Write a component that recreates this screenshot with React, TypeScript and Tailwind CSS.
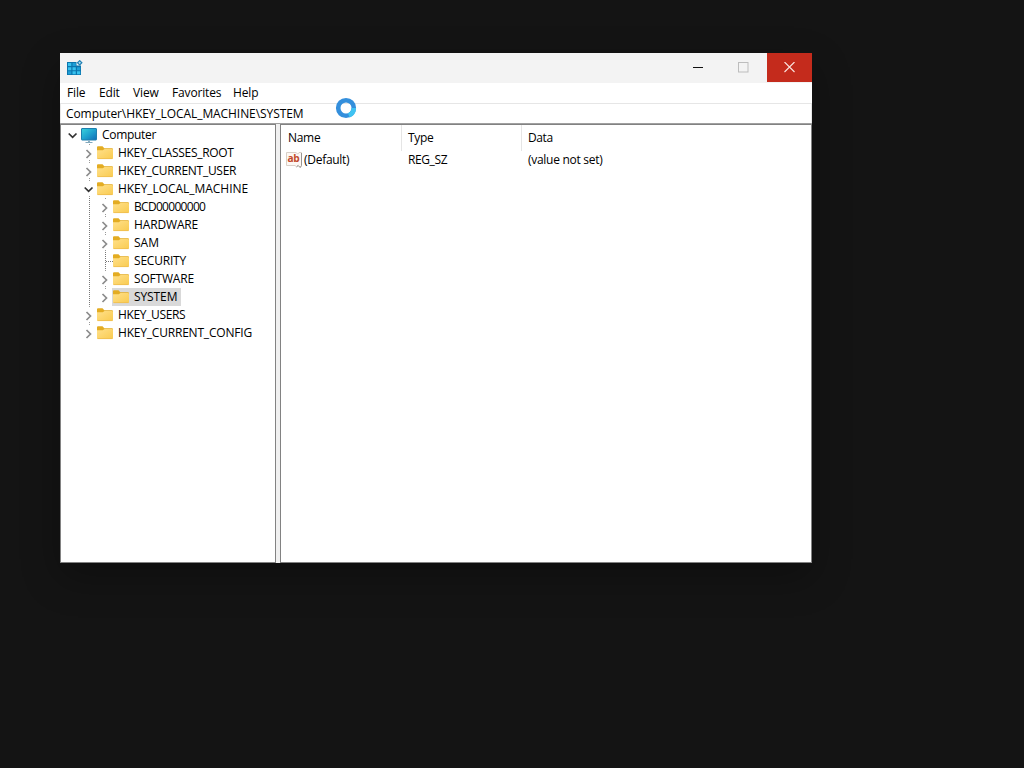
import type { ReactNode } from 'react'

type TreeNode = {
  label: string
  level: number
  state: 'open' | 'closed' | 'leaf'
  tracking: string
  icon?: 'computer' | 'folder'
  selected?: boolean
  last?: boolean
}

const treeNodes: TreeNode[] = [
  { label: 'Computer', level: 0, state: 'open', icon: 'computer', tracking: 'tracking-[-0.3px]' },
  { label: 'HKEY_CLASSES_ROOT', level: 1, state: 'closed', tracking: 'tracking-[-0.29px]' },
  { label: 'HKEY_CURRENT_USER', level: 1, state: 'closed', tracking: 'tracking-[-0.28px]' },
  { label: 'HKEY_LOCAL_MACHINE', level: 1, state: 'open', tracking: 'tracking-[-0.05px]' },
  { label: 'BCD00000000', level: 2, state: 'closed', tracking: 'tracking-[-0.7px]' },
  { label: 'HARDWARE', level: 2, state: 'closed', tracking: 'tracking-[-0.15px]' },
  { label: 'SAM', level: 2, state: 'closed', tracking: 'tracking-[0px]' },
  { label: 'SECURITY', level: 2, state: 'leaf', tracking: 'tracking-[-0.2px]' },
  { label: 'SOFTWARE', level: 2, state: 'closed', tracking: 'tracking-[-0.2px]' },
  { label: 'SYSTEM', level: 2, state: 'closed', tracking: 'tracking-[-0.1px]', selected: true, last: true },
  { label: 'HKEY_USERS', level: 1, state: 'closed', tracking: 'tracking-[-0.35px]' },
  { label: 'HKEY_CURRENT_CONFIG', level: 1, state: 'closed', tracking: 'tracking-[-0.2px]', last: true },
]

const levelPadding = ['pl-1', 'pl-5', 'pl-9']

const menuItems = [
  { label: 'File', width: 'w-8' },
  { label: 'Edit', width: 'w-[34px]' },
  { label: 'View', width: 'w-[39px]' },
  { label: 'Favorites', width: 'w-[61px]' },
  { label: 'Help', width: 'w-10' },
]

function RegeditIcon() {
  return (
    <svg className="h-4 w-4" viewBox="0 0 16 16">
      <path d="M0 2h9.5v3.5H14V15H0z" fill="#0c76ae" />
      <path d="M1 3h3.3v3H1zM1 7.2h3.3v3H1zM5.5 7.2h3.3v3H5.5zM5.5 11.3h3.3v2.9H5.5zM10 11.3h3.2v2.9H10z" fill="#38c2ee" />
      <path d="M5.5 3h3.3v3H5.5zM10 7.2h3.2v3H10zM1 11.3h3.3v2.9H1z" fill="#1f9fd6" />
      <path d="M12.7-.2l3 3-3 3-3-3z" fill="#2180b4" />
      <path d="M12.7 1.5L14 2.8l-1.3 1.3-1.3-1.3z" fill="#b5e3f3" />
    </svg>
  )
}

function ComputerIcon() {
  return (
    <svg className="h-4 w-4" viewBox="0 0 16 16">
      <defs>
        <linearGradient id="screen" x1="0" y1="0" x2="1" y2="1">
          <stop offset="0" stopColor="#3ad3dc" />
          <stop offset="0.5" stopColor="#1fa3cf" />
          <stop offset="1" stopColor="#0f6cb6" />
        </linearGradient>
      </defs>
      <rect x="0.5" y="1.5" width="15" height="11.5" rx="0.5" fill="url(#screen)" stroke="#1f7fae" />
      <path d="M7 13.5h2V15H7z" fill="#8daebf" />
      <path d="M4.5 15h7v1h-7z" fill="#82a9bd" />
    </svg>
  )
}

function FolderIcon() {
  return (
    <svg className="h-4 w-4" viewBox="0 0 16 16">
      <defs>
        <linearGradient id="folder" x1="0" y1="0" x2="1" y2="1">
          <stop offset="0" stopColor="#ffe08a" />
          <stop offset="1" stopColor="#f9cb50" />
        </linearGradient>
      </defs>
      <path d="M0 2.3Q0 1.3 1 1.3h4.5l1.8 2H15q1 0 1 1V8H0z" fill="#e3ac22" />
      <path d="M0 5.3h5.8L7.5 4H15q1 0 1 1v8q0 1-1 1H1q-1 0-1-1z" fill="url(#folder)" />
      <path d="M.5 13.6h15" stroke="#edbd4c" strokeWidth="0.8" />
    </svg>
  )
}

function StringValueIcon() {
  return (
    <svg className="h-4 w-4" viewBox="0 0 16 16">
      <path d="M.5.5h9.7l1.5 1.7L13 .5h2.5v13l-1.3 2-2-2-1.7 1.3L9 13.5H.5z" fill="#fdf8f4" stroke="#d8d0c9" />
      <path d="M15.5 1v12.5l-1.3 2-2-2-1.7 1.3" fill="none" stroke="#999592" />
      <text x="1.5" y="10.4" fontSize="10.5" fontWeight="700" fontFamily="Open Sans, sans-serif" fill="#c24a2c" textLength="12" lengthAdjust="spacingAndGlyphs">
        ab
      </text>
    </svg>
  )
}

function Chevron({ node }: { node: TreeNode }) {
  return (
    <svg className="h-[18px] w-4 shrink-0" viewBox="0 0 16 18">
      {node.state === 'open' ? <path d="M3.7 7.5l3.9 3.9 3.9-3.9" fill="none" stroke="#333" strokeWidth="1.7" /> : null}
      {node.state === 'closed' ? <path d="M5.5 6l4 4-4 4" fill="none" stroke="#8b8b8b" strokeWidth="1.7" /> : null}
      {node.state === 'leaf' ? <path d="M8.5 0v18M9 9.5h7" fill="none" stroke="#777" strokeDasharray="1 1" /> : null}
      {node.level > 0 && node.state !== 'leaf' ? (
        <path d={node.last ? 'M8.5 0v2' : 'M8.5 0v2M8.5 16v2'} fill="none" stroke="#999" strokeDasharray="1 1" />
      ) : null}
    </svg>
  )
}

function TreeRow({ node }: { node: TreeNode }) {
  return (
    <li className={`relative flex h-[18px] items-center ${levelPadding[node.level]}`}>
      {node.level === 2 ? (
        <svg className="absolute left-5 top-0 h-[18px] w-4" viewBox="0 0 16 18">
          <path d="M8.5 0v18" stroke="#777" strokeDasharray="1 1" />
        </svg>
      ) : null}
      <Chevron node={node} />
      <div className={`-ml-px flex h-[18px] items-center pl-px pr-1 ${node.selected ? 'bg-[#d9d9d9]' : ''}`}>
        {node.icon === 'computer' ? <ComputerIcon /> : <FolderIcon />}
        <span className={`ml-[5px] leading-[18px] ${node.tracking}`}>{node.label}</span>
      </div>
    </li>
  )
}

function CaptionButton({ className, children }: { className: string; children: ReactNode }) {
  return (
    <button className={`flex h-[29px] items-center justify-center ${className}`}>
      <svg className="h-[11px] w-[11px]" viewBox="0 0 11 11" fill="none">
        {children}
      </svg>
    </button>
  )
}

function TitleBar() {
  return (
    <header className="flex h-[30px] justify-between bg-[#f3f3f3]">
      <div className="pl-[7px] pt-[7px]">
        <RegeditIcon />
      </div>
      <div className="flex">
        <CaptionButton className="w-[46px] pr-0.5">
          <path d="M0 5.5h10" stroke="#111" />
        </CaptionButton>
        <CaptionButton className="w-[45px] pr-0.5">
          <rect x="0.5" y="0.5" width="9.5" height="9.5" stroke="#bdbdbd" />
        </CaptionButton>
        <CaptionButton className="w-[45px] bg-[#c42b1c] pr-px">
          <path d="M.5 0l10 10M10.5 0l-10 10" stroke="#fbe4df" strokeWidth="1.1" />
        </CaptionButton>
      </div>
    </header>
  )
}

export default function App() {
  return (
    <main className="h-screen overflow-hidden bg-[#141414] pl-[60px] pt-[53px] font-['Open_Sans',sans-serif] text-[12px] text-black">
      <div className="relative flex h-[510px] w-[752px] flex-col bg-white shadow-[0_14px_36px_rgba(0,0,0,0.3)]">
        <TitleBar />
        <nav className="flex h-5 items-center pl-[7px] tracking-[-0.15px]">
          {menuItems.map((item) => (
            <span key={item.label} className={item.width}>
              {item.label}
            </span>
          ))}
        </nav>
        <div className="flex h-5 items-center border border-b-0 border-[#e6e6e6] pl-[5px] pt-px tracking-[-0.08px]">
          Computer\HKEY_LOCAL_MACHINE\SYSTEM
        </div>
        <div className="flex min-h-0 flex-1 border-t border-[#a0a0a0] bg-[#f0f0f0]">
          <ul className="w-[216px] border border-[#828282] bg-white pt-px">
            {treeNodes.map((node) => (
              <TreeRow key={node.label} node={node} />
            ))}
          </ul>
          <section className="ml-1 flex-1 border border-[#828282] bg-white">
            <div className="flex h-[26px] pl-[7px] leading-[26px]">
              <span className="w-[114px] border-r border-[#e5e5e5] tracking-[-0.3px]">Name</span>
              <span className="w-[120px] border-r border-[#e5e5e5] pl-1.5 tracking-[-0.3px]">Type</span>
              <span className="pl-1.5 tracking-[-0.4px]">Data</span>
            </div>
            <div className="flex h-[18px] items-center pl-[5px] tracking-[-0.28px]">
              <StringValueIcon />
              <span className="ml-0.5 w-[104px]">(Default)</span>
              <span className="w-[120px] tracking-[-0.4px]">REG_SZ</span>
              <span>(value not set)</span>
            </div>
          </section>
        </div>
        <svg className="absolute left-[275px] top-[44px] h-[22px] w-[22px]" viewBox="0 0 22 22" fill="none">
          <circle cx="11" cy="11" r="7.8" stroke="#348fdc" strokeWidth="4.6" />
          <path d="M18.8 11a7.8 7.8 0 0 1-5 7.3" stroke="#3fc3f2" strokeWidth="4.6" />
        </svg>
      </div>
    </main>
  )
}
